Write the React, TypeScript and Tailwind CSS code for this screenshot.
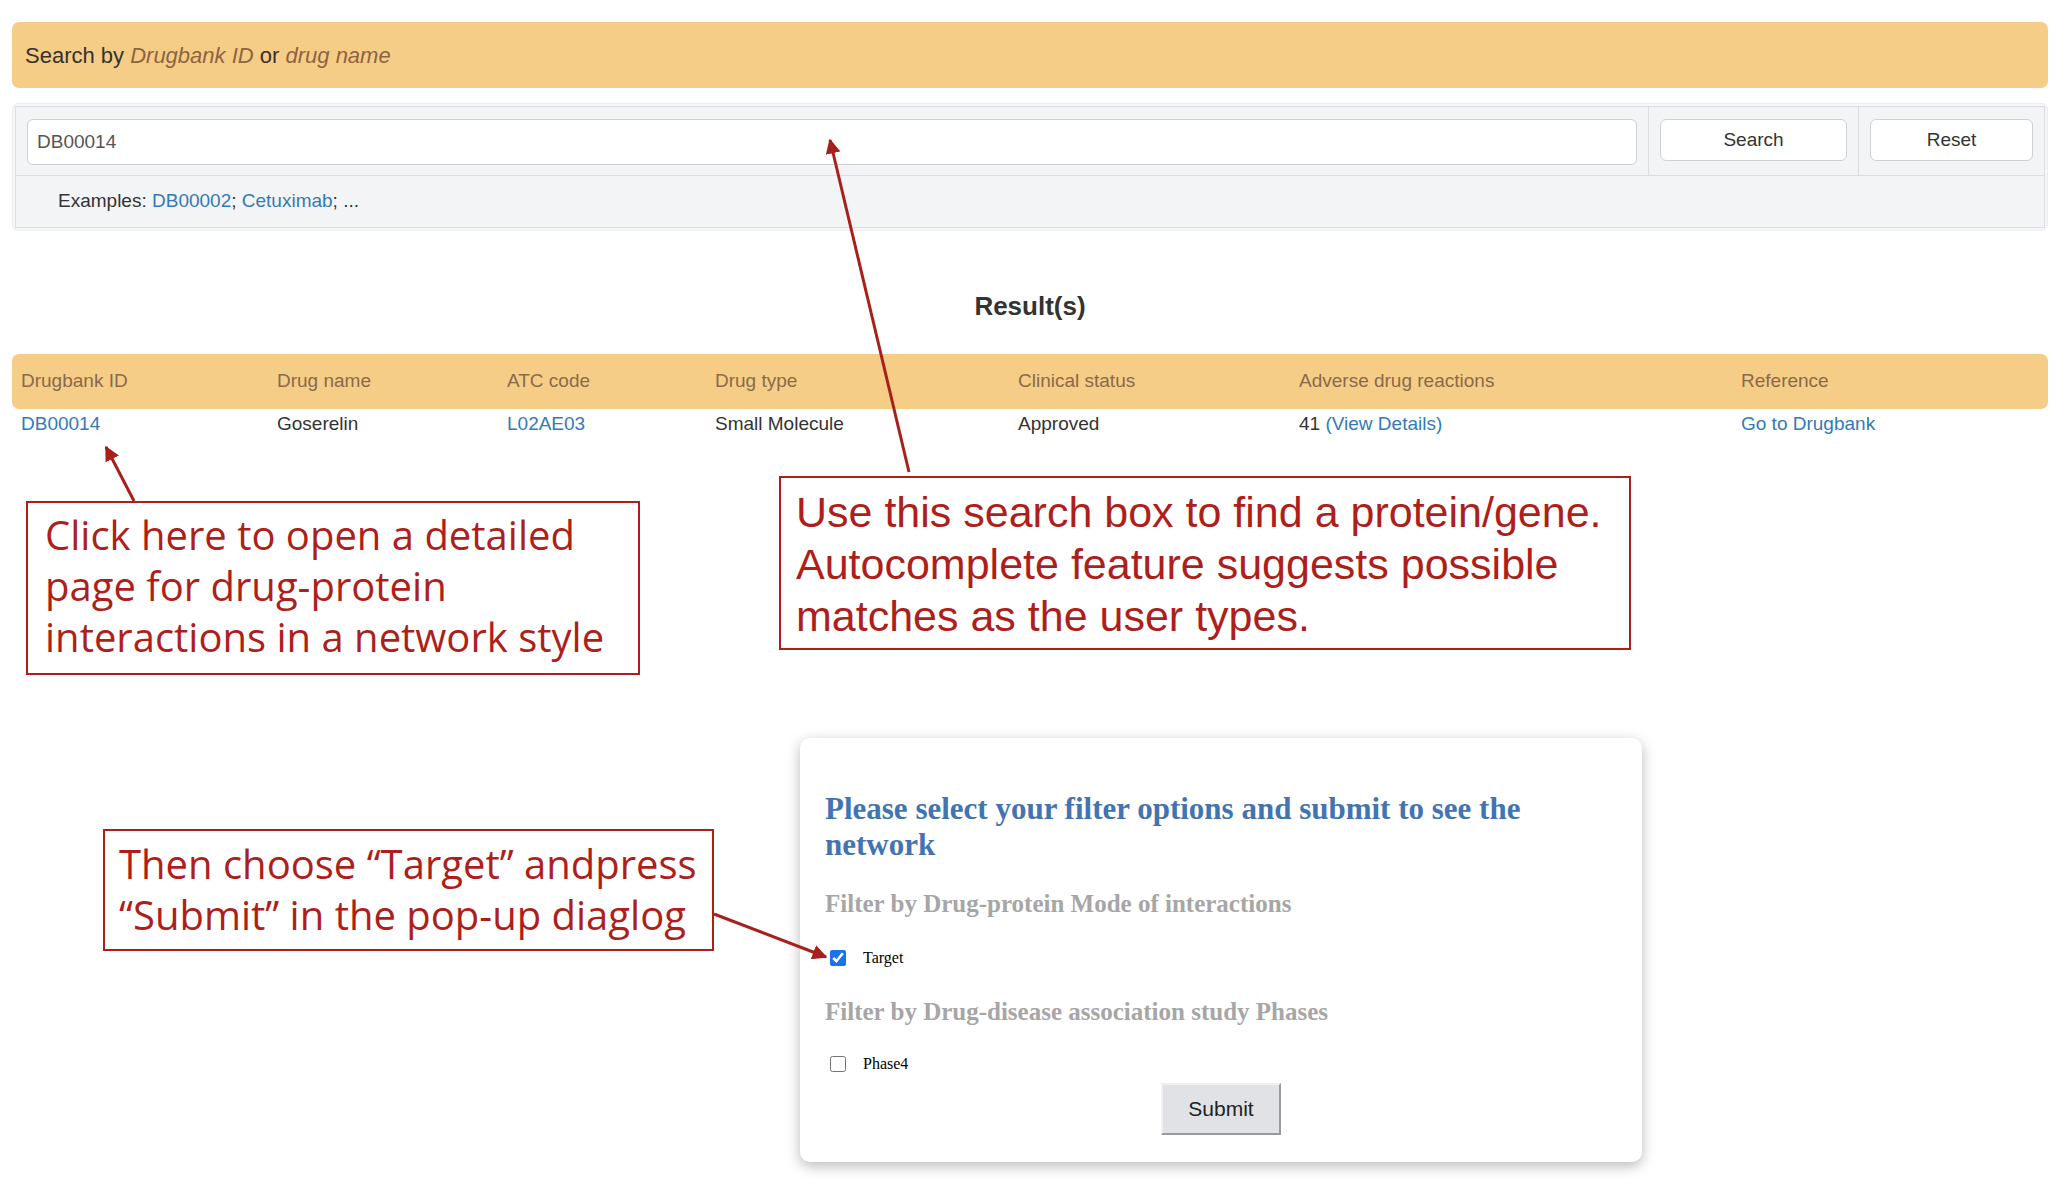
import React from 'react';

const columns = [
  { label: 'Drugbank ID', w: 'w-[256px]' },
  { label: 'Drug name', w: 'w-[230px]' },
  { label: 'ATC code', w: 'w-[208px]' },
  { label: 'Drug type', w: 'w-[303px]' },
  { label: 'Clinical status', w: 'w-[281px]' },
  { label: 'Adverse drug reactions', w: 'w-[442px]' },
  { label: 'Reference', w: 'flex-1' },
];

function Arrows() {
  return (
    <svg className="pointer-events-none absolute inset-0" width={2066} height={1192} viewBox="0 0 2066 1192">
      <defs>
        <marker id="head" viewBox="0 0 10 10" refX="9" refY="5" markerWidth="5" markerHeight="5" orient="auto">
          <path d="M0 0 L10 5 L0 10 z" fill="#a8201b" />
        </marker>
      </defs>
      <line x1={134} y1={501} x2={106} y2={447} stroke="#a8201b" strokeWidth={3} markerEnd="url(#head)" />
      <line x1={909} y1={472} x2={830} y2={140} stroke="#a8201b" strokeWidth={3} markerEnd="url(#head)" />
      <line x1={714} y1={914} x2={826} y2={957} stroke="#a8201b" strokeWidth={3} markerEnd="url(#head)" />
    </svg>
  );
}

export default function App() {
  return (
    <div className="relative h-[1192px] w-[2066px] overflow-hidden bg-white font-['Liberation_Sans',Arial,sans-serif] text-[#333]">
      <div className="pl-3 pr-[18px] pt-[22px]">
        <div className="flex h-[66px] items-center rounded-[7px] bg-[#f6cd86] px-[13px] text-[22px]">
          Search by&nbsp;<i className="text-[#8d6440]">Drugbank ID</i>&nbsp;or&nbsp;<i className="text-[#8d6440]">drug name</i>
        </div>

        <div className="mt-[15px] rounded-[6px] border border-[#eceef1] bg-[#f6f7f8] p-[2px]">
          <div className="border border-[#dcdde0] bg-[#f3f4f6]">
            <div className="flex h-[69px] border-b border-[#dcdde0]">
              <div className="flex-1 px-[11px] pt-[12px]">
                <input
                  readOnly
                  value="DB00014"
                  className="h-[46px] w-full rounded-[6px] border border-[#cfd0d3] bg-white px-[9px] text-[19px] text-[#555] outline-none"
                />
              </div>
              <div className="w-[210px] border-l border-[#dcdde0] px-[11px] pt-[12px]">
                <button className="h-[42px] w-full rounded-[6px] border border-[#cfd0d3] bg-white text-[19px]">Search</button>
              </div>
              <div className="w-[186px] border-l border-[#dcdde0] px-[11px] pt-[12px]">
                <button className="h-[42px] w-full rounded-[6px] border border-[#cfd0d3] bg-white text-[19px]">Reset</button>
              </div>
            </div>
            <div className="flex h-[51px] items-center pl-[42px] text-[19px]">
              Examples:&nbsp;<span className="text-[#337ab7]">DB00002</span>;&nbsp;<span className="text-[#337ab7]">Cetuximab</span>; ...
            </div>
          </div>
        </div>

        <h2 className="mt-[60px] text-center text-[26px] font-bold leading-[30px]">Result(s)</h2>

        <div className="mt-[33px] text-[19px]">
          <div className="flex h-[55px] items-center rounded-[7px] bg-[#f6cd86] px-[9px] text-[#8a6a4a]">
            {columns.map((c) => (
              <div key={c.label} className={c.w}>{c.label}</div>
            ))}
          </div>
          <div className="flex h-[31px] items-center px-[9px]">
            <div className="w-[256px] text-[#337ab7]">DB00014</div>
            <div className="w-[230px]">Goserelin</div>
            <div className="w-[208px] text-[#337ab7]">L02AE03</div>
            <div className="w-[303px]">Small Molecule</div>
            <div className="w-[281px]">Approved</div>
            <div className="w-[442px]">41 <span className="text-[#337ab7]">(View Details)</span></div>
            <div className="flex-1 text-[#337ab7]">Go to Drugbank</div>
          </div>
        </div>
      </div>

      {/* pop-up dialog */}
      <div className="ml-[800px] mt-[298px] w-[842px] rounded-[10px] bg-white px-[25px] pb-[27px] pt-[53px] font-['Liberation_Serif','Times_New_Roman',serif] shadow-[0_4px_14px_rgba(0,0,0,0.28)]">
        <h3 className="text-[31px] font-bold leading-[36px] text-[#4274b2]">
          Please select your filter options and submit to see the network
        </h3>
        <div className="mt-[26px] text-[25px] font-bold leading-[30px] text-[#a6a6a6]">Filter by Drug-protein Mode of interactions</div>
        <label className="mt-[29px] flex h-[20px] items-center text-[16px] text-black">
          <input type="checkbox" readOnly checked className="ml-[5px] h-[16px] w-[16px] accent-[#1a73e8]" />
          <span className="ml-[17px]">Target</span>
        </label>
        <div className="mt-[29px] text-[25px] font-bold leading-[30px] text-[#a6a6a6]">Filter by Drug-disease association study Phases</div>
        <label className="mt-[27px] flex h-[20px] items-center text-[16px] text-black">
          <input type="checkbox" readOnly className="ml-[5px] h-[16px] w-[16px]" />
          <span className="ml-[17px]">Phase4</span>
        </label>
        <div className="mt-[9px] flex justify-center">
          <button className="h-[52px] w-[120px] border-2 border-b-[#9a9a9a] border-l-[#f0f0f0] border-r-[#9a9a9a] border-t-[#f0f0f0] bg-[#e1e2e5] font-['Liberation_Sans',Arial,sans-serif] text-[21px] text-[#222]">
            Submit
          </button>
        </div>
      </div>

      {/* annotations */}
      <div className="absolute left-[26px] top-[501px] h-[174px] w-[614px] border-2 border-[#ae1f1c] px-[17px] pt-[6px] font-['Open_Sans',sans-serif] text-[40px] leading-[51px] text-[#ae1f1c]">
        Click here to open a detailed page for drug-protein interactions in a network style
      </div>
      <div className="absolute left-[779px] top-[476px] h-[174px] w-[852px] border-2 border-[#ae1f1c] px-[15px] pt-[8px] text-[43px] leading-[52px] text-[#ae1f1c]">
        Use this search box to find a protein/gene. Autocomplete feature suggests possible matches as the user types.
      </div>
      <div className="absolute left-[103px] top-[829px] h-[122px] w-[611px] border-2 border-[#ae1f1c] px-[14px] pt-[7px] font-['Open_Sans',sans-serif] text-[40px] leading-[51px] text-[#ae1f1c]">
        Then choose “Target” andpress “Submit” in the pop-up diaglog
      </div>

      <Arrows />
    </div>
  );
}
